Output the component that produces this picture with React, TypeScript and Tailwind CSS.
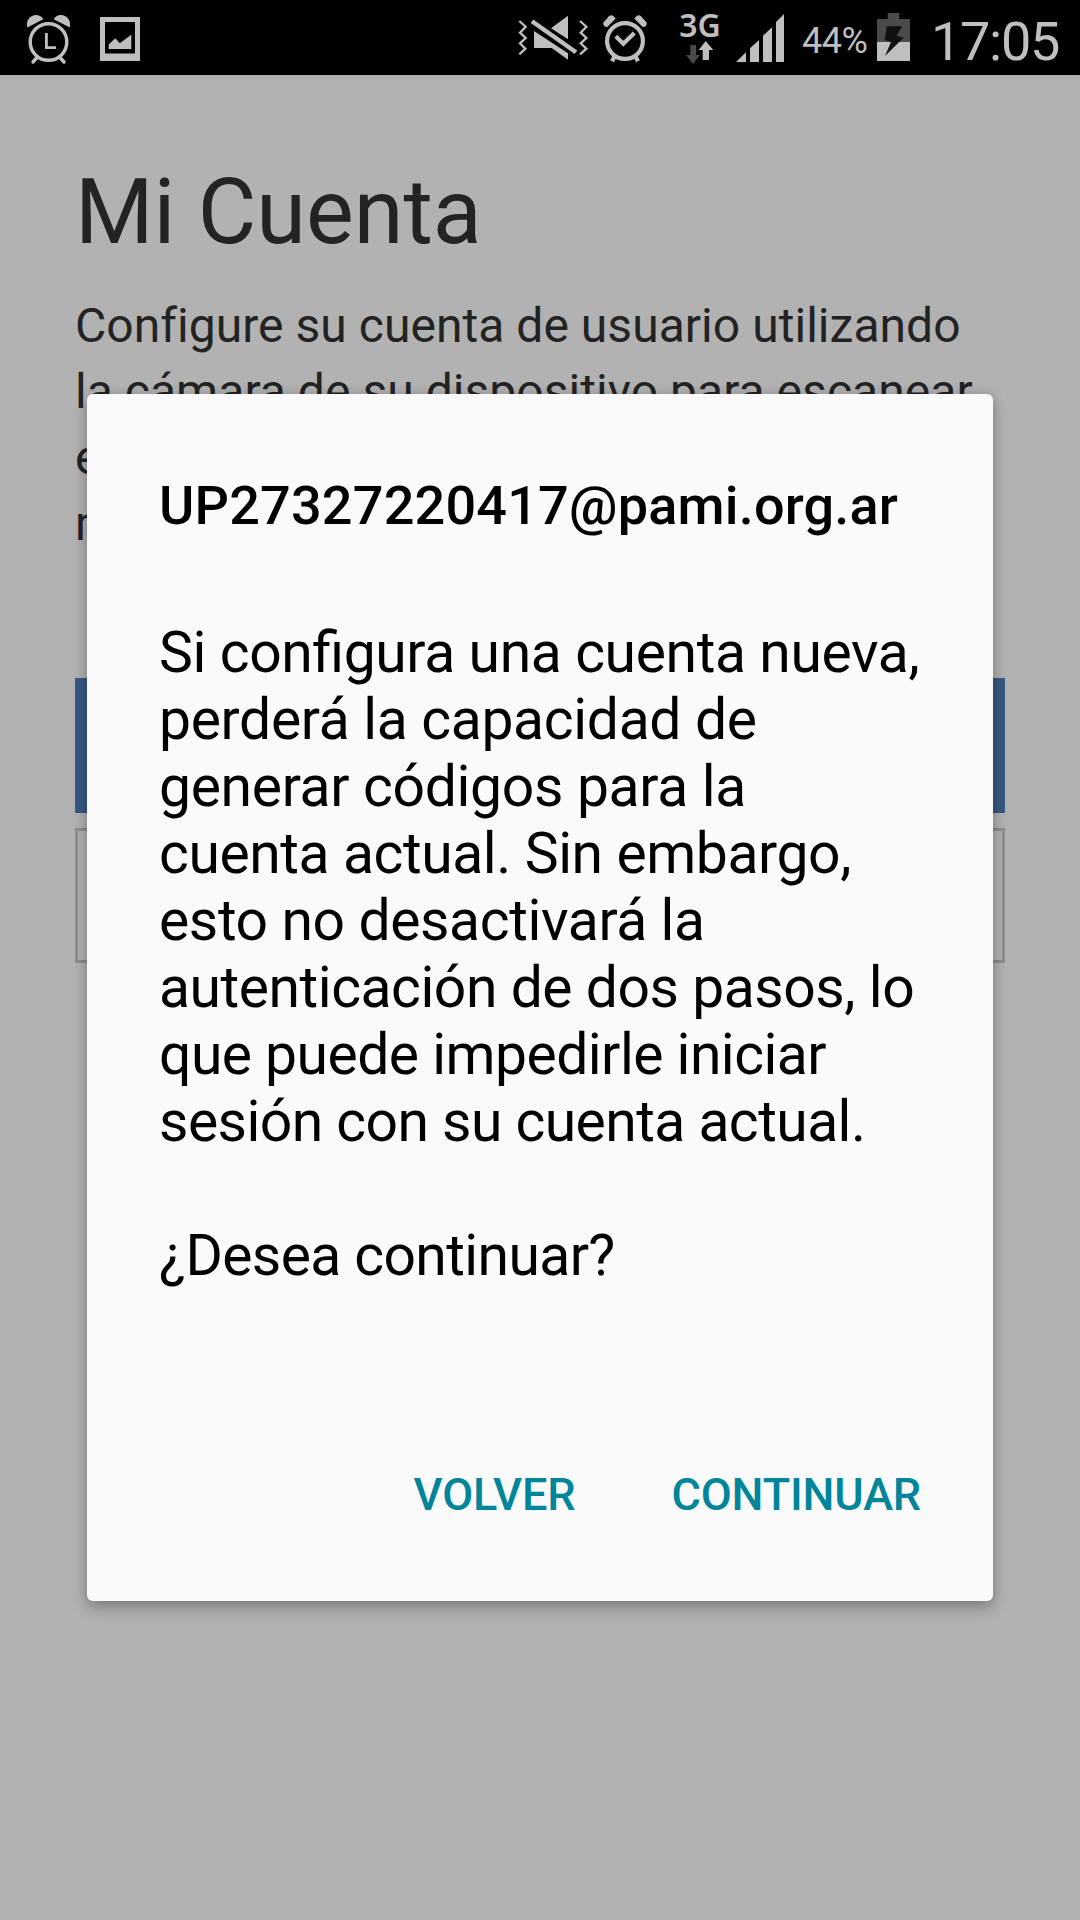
import { FC } from 'react';

const intro = [
  'Configure su cuenta de usuario utilizando',
  'la cámara de su dispositivo para escanear',
  'el código QR o ingrese los datos',
  'manualmente.',
];

const warning = [
  { text: 'Si configura una cuenta nueva,', tracking: 'tracking-[-0.37px]' },
  { text: 'perderá la capacidad de', tracking: 'tracking-[-0.32px]' },
  { text: 'generar códigos para la', tracking: 'tracking-[-0.32px]' },
  { text: 'cuenta actual. Sin embargo,', tracking: 'tracking-[-0.4px]' },
  { text: 'esto no desactivará la', tracking: 'tracking-[-0.38px]' },
  { text: 'autenticación de dos pasos, lo', tracking: 'tracking-[-0.45px]' },
  { text: 'que puede impedirle iniciar', tracking: 'tracking-[-0.52px]' },
  { text: 'sesión con su cuenta actual.', tracking: 'tracking-[-0.54px]' },
];

const AlarmIcon: FC = () => (
  <svg className="h-[75px] w-[50px]" viewBox="24 0 50 75" fill="currentColor">
    <path d="M27.3 27.5C25.4 20 30.5 15 36 15c3.5 0 6 1.8 7.3 4.3Z" />
    <path d="M69.7 27.5C71.6 20 66.5 15 61 15c-3.5 0-6 1.8-7.3 4.3Z" />
    <g fill="none" stroke="currentColor" strokeWidth="3.4">
      <circle cx="48.5" cy="42" r="18.3" />
      <path d="M37.5 57 33 62M59.5 57 64 62" strokeLinecap="round" />
    </g>
    <path d="M45 33h2.8v13.2H56V49H45Z" />
  </svg>
);

const PictureIcon: FC = () => (
  <svg className="h-[75px] w-[40px]" viewBox="100 0 40 75" fill="currentColor">
    <path fillRule="evenodd" d="M100 17h40v44h-40ZM105 22v31.5h30V22Z" />
    <path d="M108.7 49v-4.5l6.6-6.3 4.5 5 11.5-8.5V49Z" />
  </svg>
);

const MuteIcon: FC = () => (
  <svg className="h-[75px] w-[72px]" viewBox="517 0 72 75" fill="currentColor">
    <g fill="none" stroke="currentColor" strokeWidth="2.3">
      <path d="M519.3 21l6.4 5.7-5.7 6 5.7 5.3-5.7 5.3 5.4 5.4-6.1 5.6" />
      <path d="M580 21l6.4 5.7-5.7 6 5.7 5.3-5.7 5.3 5.7 5.4-6.4 5.6" />
      <path d="M532 21.3 576 52.3" strokeWidth="4.4" />
    </g>
    <path d="M568 15.7v23.6l-17-11Z" />
    <path d="M534 31v17h17.7L568 59.7v-6.4Z" />
  </svg>
);

const AlarmCheckIcon: FC = () => (
  <svg className="h-[75px] w-[46px]" viewBox="602 0 46 75" fill="currentColor">
    <path d="M603.2 22.7 609 16.2q2.5-2 4.5 0l2.2 2.3-8.4 8.5-2.3-.3q-2-1.5-1.8-4Z" />
    <path d="M646.8 22.7 641 16.2q-2.5-2-4.5 0l-2.2 2.3 8.4 8.5 2.3-.3q2-1.5 1.8-4Z" />
    <g fill="none" stroke="currentColor" strokeWidth="4.2">
      <circle cx="625" cy="41" r="17.9" />
      <path d="M615.8 36.3l7.5 7.4 11-10.7" />
      <path d="M614.5 56.5l-2.5 4.7M635.5 56.5l2.5 4.7" />
    </g>
  </svg>
);

const NetworkIndicator: FC = () => (
  <div className="flex h-[75px] w-[40px] flex-col items-center pt-[9px]">
    <span className="h-[32px] font-['Noto_Sans'] text-[32px] leading-[32px] font-semibold">3G</span>
    <svg className="h-[24px] w-[28px]" viewBox="688 41 28 24" fill="currentColor">
      <path fill="#4a4a4a" d="M692.3 45h5.7v10h4l-7 9-7-9h4.3Z" />
      <path d="M704.7 60V50h-4l7-9 7.6 9H711v10Z" />
    </svg>
  </div>
);

const SignalIcon: FC = () => (
  <svg className="h-[75px] w-[48px]" viewBox="736 0 48 75" fill="currentColor">
    <path d="M736 62l10-9.7V62ZM750 62V48.3l9-8.3v22ZM763 62V35.7l9-8.4V62ZM776 62V22l8-8v48Z" />
  </svg>
);

const BatteryIcon: FC = () => (
  <svg className="h-[75px] w-[33px]" viewBox="877 0 33 75">
    <path fill="#4a4a4a" d="M887.7 13h11.6v6H910v23h-33V19h10.7Z" />
    <path fill="currentColor" d="M877 42h33v19h-33Z" />
    <path d="M886.7 26.3H902l-5.3 9.5 7 1.7L885 56l6-14-6.3-2Z" fill="#111" />
  </svg>
);

const StatusBar: FC = () => (
  <header className="flex h-[75px] items-start bg-black pl-6 text-[#bfbfbf]">
    <AlarmIcon />
    <div className="w-[26px]" />
    <PictureIcon />
    <div className="ml-auto flex items-start pr-[18px]">
      <MuteIcon />
      <div className="w-[13px]" />
      <AlarmCheckIcon />
      <div className="w-[32px]" />
      <NetworkIndicator />
      <div className="w-[16px]" />
      <SignalIcon />
      <span className="ml-[18px] w-[75px] pt-[20px] text-[36px] leading-[42px] tracking-[-0.5px]">44%</span>
      <BatteryIcon />
      <span className="ml-[21px] w-[131px] pt-[10px] text-[54px] leading-[64px] tracking-[-1.3px] whitespace-nowrap">
        17:05
      </span>
    </div>
  </header>
);

const AccountDialog: FC = () => (
  <section
    role="dialog"
    className="absolute top-[394px] left-[87px] flex h-[1207px] w-[906px] flex-col rounded-[6px] bg-[#fafafa] px-[72px] text-black shadow-[0_8px_16px_rgba(0,0,0,0.22),0_0_12px_rgba(0,0,0,0.16)]"
  >
    <h2 className="mt-[80px] text-[54px] leading-[64px] font-medium tracking-[0.2px] whitespace-nowrap">
      UP27327220417@pami.org.ar
    </h2>
    <div className="mt-[81px] text-[57px] leading-[67px] whitespace-nowrap [font-feature-settings:'liga'_1]">
      {warning.map(({ text, tracking }) => (
        <p key={text} className={tracking}>
          {text}
        </p>
      ))}
      <p className="mt-[67px] tracking-[-0.6px]">¿Desea continuar?</p>
    </div>
    <div className="mt-[179px] flex justify-end gap-[96px] text-[45px] leading-[54px] font-medium text-[#00859b]">
      <button type="button" className="tracking-[-0.15px]">VOLVER</button>
      <button type="button" className="tracking-[-0.15px]">CONTINUAR</button>
    </div>
  </section>
);

const App: FC = () => {
  return (
    <div className="relative h-[1920px] w-[1080px] overflow-hidden bg-[#b2b2b2] font-[Roboto,sans-serif] text-[#232323]">
      <StatusBar />

      <main className="px-[75px] pt-[85px]">
        <h1 className="text-[90px] leading-[106px]">Mi Cuenta</h1>
        <div className="mt-[27px] text-[48px] leading-[66px] tracking-[0.04px] whitespace-nowrap">
          {intro.map((line) => (
            <p key={line}>{line}</p>
          ))}
        </div>
        <div className="mt-[121px] h-[135px] bg-[#3a5a84]" />
        <div className="mt-[15px] h-[135px] border-[3px] border-[#8e8e8e]" />
      </main>

      <AccountDialog />
    </div>
  );
};

export default App;
